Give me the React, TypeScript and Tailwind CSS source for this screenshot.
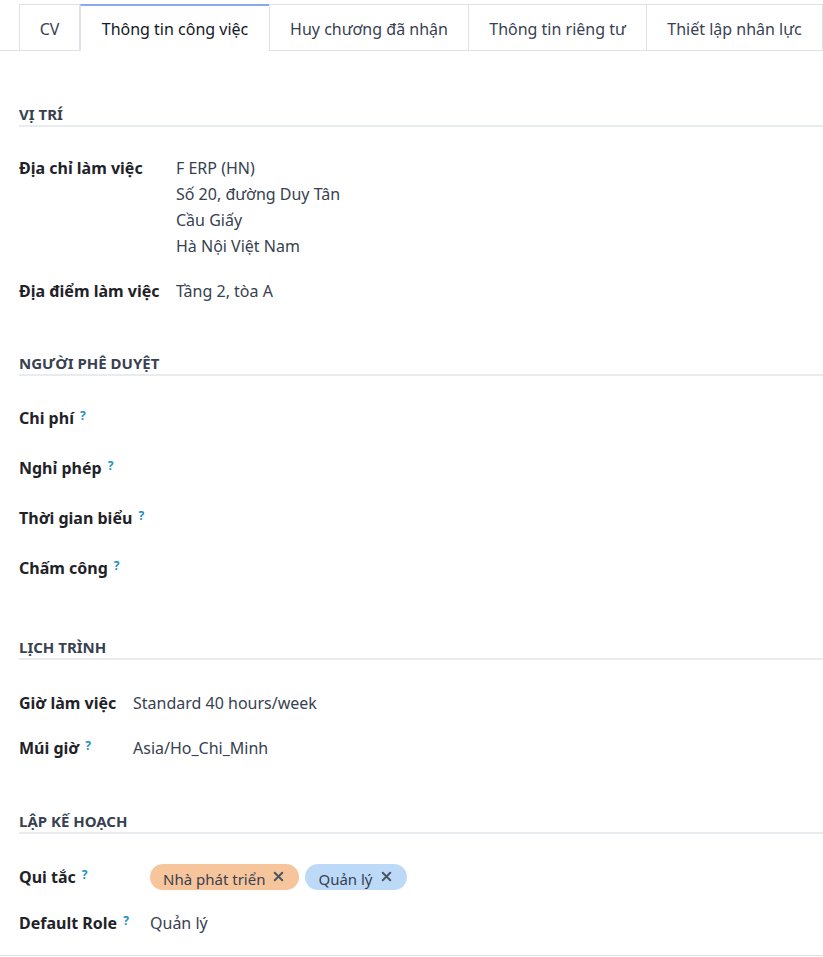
import { X } from "lucide-react"

const tabs = [
    { t: "CV", w: "w-[61px]" },
    { t: "Thông tin công việc", w: "w-[190px]" },
    { t: "Huy chương đã nhận", w: "w-[200px]" },
    { t: "Thông tin riêng tư", w: "w-[179px]" },
    { t: "Thiết lập nhân lực", w: "w-[177px]" },
]

function Help() {
    return <sup className="ml-[6px] text-[12px] font-bold text-[#1a8fc4] relative -top-[4px]">?</sup>
}

function Heading({ title, className }: { title: string; className: string }) {
    return <div className={"border-b-2 border-[#e9ecef] pb-[1px] text-[15px] leading-[20px] font-bold uppercase text-[#374151] " + className}>
        {title}
    </div>
}

function Label({ text, help, width }: { text: string; help?: boolean; width: string }) {
    return <div className={"shrink-0 whitespace-nowrap font-bold text-[#1f2328] " + width}>
        {text}{help && <Help />}
    </div>
}

function Tag({ text, color }: { text: string; color: string }) {
    return <div className={"flex h-[26px] items-start overflow-hidden rounded-full pl-[13px] pr-[13px] " + color}>
        <span className="whitespace-nowrap pt-[4px] text-[15px] leading-[22px] text-[#374151]">{text}</span>
        <X size={15} strokeWidth={3.2} className="ml-[6px] mt-[5px] shrink-0 text-[#4b5563]" />
    </div>
}

export default function App() {
    return <div className="min-h-[957px] bg-white font-['Noto_Sans',sans-serif] text-[16px] leading-[26px]">
        <div className="flex border-b border-[#dee2e6] pl-[19px] pt-[4px]">
            {tabs.map((tab, i) => i === 1
                ? <div key={tab.t} className={"-mb-px shrink-0 whitespace-nowrap border-x border-t-2 border-x-[#dee2e6] border-t-[#8aa8ec] bg-white pt-[10px] pb-[8px] text-center text-[#111827] " + tab.w}>{tab.t}</div>
                : <div key={tab.t} className={"-mb-px -ml-px shrink-0 whitespace-nowrap border border-[#dee2e6] pt-[11px] pb-[8px] text-center text-[#374151] first:ml-0 " + tab.w}>{tab.t}</div>
            )}
        </div>

        <div className="border-b border-[#dee2e6] pb-[19px] pl-[19px]">
            <Heading title="Vị trí" className="mt-[53px]" />
            <div className="mt-[28px] flex">
                <Label text="Địa chỉ làm việc" width="w-[157px]" />
                <div className="text-[#374151]">
                    <div>F ERP (HN)</div>
                    <div>Số 20, đường Duy Tân</div>
                    <div>Cầu Giấy</div>
                    <div>Hà Nội Việt Nam</div>
                </div>
            </div>
            <div className="mt-[19px] flex">
                <Label text="Địa điểm làm việc" width="w-[157px]" />
                <div className="text-[#374151]">Tầng 2, tòa A</div>
            </div>

            <Heading title="Người phê duyệt" className="mt-[49px]" />
            <div className="mt-[29px] flex flex-col gap-[24px]">
                <Label text="Chi phí" help width="w-[157px]" />
                <Label text="Nghỉ phép" help width="w-[157px]" />
                <Label text="Thời gian biểu" help width="w-[157px]" />
                <Label text="Chấm công" help width="w-[157px]" />
            </div>

            <Heading title="Lịch trình" className="mt-[56px]" />
            <div className="mt-[30px] flex">
                <Label text="Giờ làm việc" width="w-[114px]" />
                <div className="text-[#374151]">Standard 40 hours/week</div>
            </div>
            <div className="mt-[19px] flex">
                <Label text="Múi giờ" help width="w-[114px]" />
                <div className="text-[#374151]">Asia/Ho_Chi_Minh</div>
            </div>

            <Heading title="Lập kế hoạch" className="mt-[50px]" />
            <div className="mt-[30px] flex">
                <Label text="Qui tắc" help width="w-[131px]" />
                <div className="flex gap-[6px]">
                    <Tag text="Nhà phát triển" color="bg-[#f7c59c]" />
                    <Tag text="Quản lý" color="bg-[#bcdaf8]" />
                </div>
            </div>
            <div className="mt-[20px] flex">
                <Label text="Default Role" help width="w-[131px]" />
                <div className="text-[#374151]">Quản lý</div>
            </div>
        </div>
    </div>
}
